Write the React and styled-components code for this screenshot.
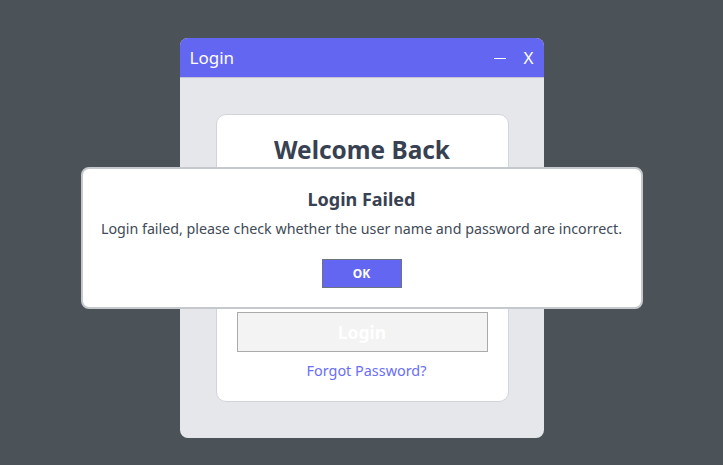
import styled, { createGlobalStyle } from "styled-components";

const GlobalStyle = createGlobalStyle`
  html, body {
    margin: 0;
    height: 100%;
    background: #4b5359;
    font-family: "Noto Sans", "Open Sans", sans-serif;
  }
  #root {
    height: 100%;
  }
`;

const Page = styled.div({
  height: "100%",
  display: "flex",
  justifyContent: "center",
  paddingTop: "38px",
  boxSizing: "border-box",
});

const Window = styled.div({
  width: "364px",
  height: "400px",
  display: "flex",
  flexDirection: "column",
  borderRadius: "8px",
  overflow: "hidden",
  background: "#e5e7eb",
});

const TitleBar = styled.div({
  height: "40px",
  flexShrink: 0,
  display: "flex",
  alignItems: "center",
  justifyContent: "space-between",
  padding: "0 10px",
  background: "#6366f1",
  borderBottom: "1px solid #c3c5d6",
  boxSizing: "border-box",
  color: "#fff",
});

const WindowTitle = styled.span({
  fontSize: "17px",
});

const Controls = styled.div({
  display: "flex",
  alignItems: "center",
  gap: "18px",
});

const MinimizeButton = styled.span({
  width: "12px",
  height: "1px",
  marginTop: "2px",
  background: "#fff",
  cursor: "pointer",
});

const CloseButton = styled.span({
  fontSize: "17px",
  lineHeight: 1,
  cursor: "pointer",
});

const Body = styled.div({
  flex: 1,
  padding: "36px 35px 36px 36px",
  display: "flex",
});

const Card = styled.div({
  flex: 1,
  display: "flex",
  flexDirection: "column",
  alignItems: "stretch",
  padding: "18px 20px 18px",
  background: "#fff",
  border: "1px solid #d1d5db",
  borderRadius: "10px",
});

const Heading = styled.h1({
  margin: 0,
  height: "34px",
  lineHeight: "34px",
  textAlign: "center",
  fontSize: "24.4px",
  fontWeight: 700,
  color: "#374151",
});

const Fields = styled.div({
  display: "flex",
  flexDirection: "column",
  gap: "14px",
  margin: "20px 0 31px",
});

const Input = styled.input({
  height: "40px",
  boxSizing: "border-box",
  border: "1px solid #d1d5db",
  padding: "0 10px",
  fontSize: "15px",
});

const LoginButton = styled.button({
  height: "40px",
  background: "#f3f3f3",
  border: "1px solid #aaaaaa",
  color: "#fff",
  fontFamily: "inherit",
  fontSize: "17.5px",
  fontWeight: 700,
});

const ForgotLink = styled.a({
  marginTop: "8px",
  paddingLeft: "9px",
  lineHeight: "22px",
  textAlign: "center",
  fontSize: "14.4px",
  color: "#6b6ef6",
  textDecoration: "none",
  cursor: "pointer",
});

const Overlay = styled.div({
  position: "fixed",
  inset: 0,
  display: "flex",
  alignItems: "center",
  justifyContent: "center",
  paddingTop: "11px",
});

const Dialog = styled.div({
  width: "562px",
  boxSizing: "border-box",
  display: "flex",
  flexDirection: "column",
  alignItems: "center",
  padding: "18px 0 19px",
  background: "#fff",
  border: "2px solid #c5c9cd",
  borderRadius: "8px",
});

const DialogTitle = styled.h2({
  margin: 0,
  lineHeight: "24px",
  fontSize: "18px",
  fontWeight: 700,
  color: "#374151",
});

const DialogText = styled.p({
  margin: "7px 0 19px",
  lineHeight: "22px",
  fontSize: "14.25px",
  color: "#414a57",
});

const OkButton = styled.button({
  width: "80px",
  height: "29px",
  background: "#6366f1",
  border: "1px solid #6b7280",
  color: "#fff",
  fontFamily: "inherit",
  fontSize: "12px",
  fontWeight: 700,
});

export default function App() {
  return (
    <>
      <GlobalStyle />
      <Page>
        <Window>
          <TitleBar>
            <WindowTitle>Login</WindowTitle>
            <Controls>
              <MinimizeButton />
              <CloseButton>X</CloseButton>
            </Controls>
          </TitleBar>
          <Body>
            <Card>
              <Heading>Welcome Back</Heading>
              <Fields>
                <Input placeholder="Username" />
                <Input type="password" placeholder="Password" />
              </Fields>
              <LoginButton disabled>Login</LoginButton>
              <ForgotLink>Forgot Password?</ForgotLink>
            </Card>
          </Body>
        </Window>
      </Page>
      <Overlay>
        <Dialog>
          <DialogTitle>Login Failed</DialogTitle>
          <DialogText>
            Login failed, please check whether the user name and password are incorrect.
          </DialogText>
          <OkButton>OK</OkButton>
        </Dialog>
      </Overlay>
    </>
  );
}
